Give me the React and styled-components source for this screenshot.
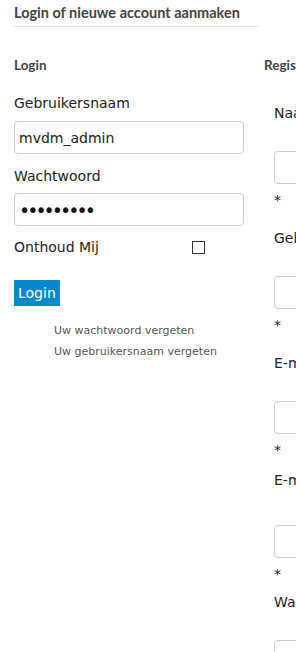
import React from 'react'
import styled, { createGlobalStyle } from 'styled-components'

const GlobalStyle = createGlobalStyle`
  html, body {
    margin: 0;
    padding: 0;
    background: #fff;
    overflow: hidden;
  }
  body {
    font-family: "DejaVu Sans", Verdana, sans-serif;
    color: #222;
  }
`

const Page = styled.div`
  padding: 0 0 0 14px;
  width: 520px;
`

const Title = styled.h2`
  font-family: Lato, "Open Sans", sans-serif;
  font-weight: 700;
  font-size: 14.5px;
  color: #444;
  margin: 0;
  padding: 5px 0 6px;
  width: 244px;
  border-bottom: 1px solid #ddd;
  line-height: 15px;
`

const Columns = styled.div`
  display: flex;
  gap: 20px;
  align-items: flex-start;
`

const Column = styled.div`
  width: 230px;
  flex: none;
`

const SectionTitle = styled.h3`
  font-family: Lato, "Open Sans", sans-serif;
  font-weight: 700;
  font-size: 13.5px;
  color: #444;
  margin: 31px 0 0;
  line-height: 14px;
`

const Label = styled.div`
  font-size: 14px;
  line-height: 18px;
  margin-top: ${p => p.$top || 0}px;
  padding-left: ${p => (p.$indent ? 10 : 0)}px;
  white-space: nowrap;
`

const Input = styled.input`
  display: block;
  box-sizing: border-box;
  width: 230px;
  height: 33px;
  margin-top: ${p => p.$top || 0}px;
  margin-left: ${p => (p.$indent ? 10 : 0)}px;
  border: 1px solid #ccc;
  border-radius: 4px;
  padding: 0 4px;
  font-family: "DejaVu Sans", Verdana, sans-serif;
  font-size: 14px;
  color: #222;
  background: #fff;
  outline: none;

  &[type='password'] {
    font-size: 19px;
    letter-spacing: -3px;
    color: #111;
  }
`

const CheckRow = styled.div`
  display: flex;
  align-items: center;
  margin-top: 12px;
  font-size: 14px;
  line-height: 18px;
`

const CheckLabel = styled.span`
  width: 178px;
`

const Check = styled.span`
  width: 11px;
  height: 11px;
  border: 1px solid #333;
  display: inline-block;
`

const Button = styled.button`
  display: block;
  margin-top: 24px;
  height: 26px;
  padding: 0 4px;
  background: #0588d0;
  color: #fff;
  border: none;
  font-family: "DejaVu Sans", Verdana, sans-serif;
  font-size: 14px;
`

const Links = styled.div`
  margin-top: 17px;
  padding-left: 40px;
  display: flex;
  flex-direction: column;
  gap: 6px;
`

const Link = styled.a`
  font-size: 11px;
  line-height: 15px;
  color: #555;
  text-decoration: none;
`

const Star = styled.div`
  padding-left: 10px;
  font-size: 14px;
  line-height: 18px;
  margin-top: 7px;
`

const registerFields = [
  { label: 'Naam', top: 32, gap: 29 },
  { label: 'Gebruikersnaam', top: 20, gap: 29 },
  { label: 'E-mailadres', top: 20, gap: 29 },
  { label: 'E-mailadres bevestigen', top: 12, gap: 36 },
  { label: 'Wachtwoord', top: 10, gap: 29 },
]

export default function App() {
  return (
    <Page>
      <GlobalStyle />
      <Title>Login of nieuwe account aanmaken</Title>
      <Columns>
        <Column>
          <SectionTitle>Login</SectionTitle>
          <Label $top={22}>Gebruikersnaam</Label>
          <Input $top={9} defaultValue="mvdm_admin" />
          <Label $top={13}>Wachtwoord</Label>
          <Input $top={8} type="password" defaultValue="wachtwoor" />
          <CheckRow>
            <CheckLabel>Onthoud Mij</CheckLabel>
            <Check />
          </CheckRow>
          <Button>Login</Button>
          <Links>
            <Link href="#">Uw wachtwoord vergeten</Link>
            <Link href="#">Uw gebruikersnaam vergeten</Link>
          </Links>
        </Column>
        <Column>
          <SectionTitle>Registreren</SectionTitle>
          {registerFields.map(f => (
            <React.Fragment key={f.label}>
              <Label $top={f.top} $indent>{f.label}</Label>
              <Input $top={f.gap} $indent />
              <Star>*</Star>
            </React.Fragment>
          ))}
        </Column>
      </Columns>
    </Page>
  )
}
